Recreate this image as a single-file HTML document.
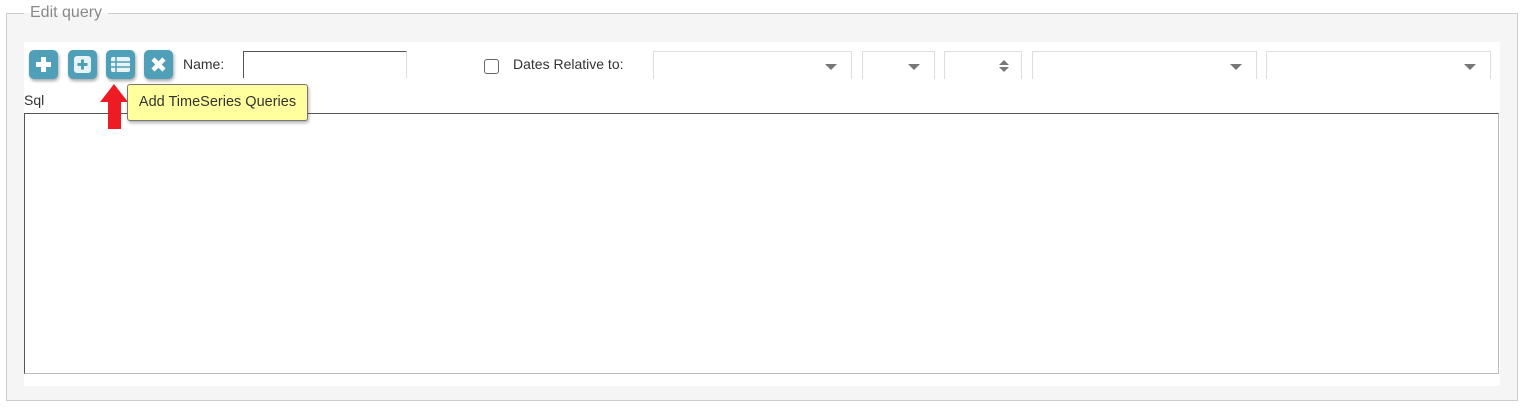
<!DOCTYPE html>
<html><head><style>
body{margin:0;width:1528px;height:414px;background:#fff;font-family:"Liberation Sans",sans-serif;position:relative;overflow:hidden}
.a{position:absolute}
.fs{left:6px;top:13px;width:1510px;height:386px;border:1px solid #ccc;background:#f5f5f5}
.lg{left:24px;top:3px;padding:0 6px;background:linear-gradient(#fff 50%,#f5f5f5 50%);color:#888;font-size:16px;line-height:20px}
.panel{left:24px;top:42px;width:1476px;height:344px;background:#fff}
.btn{top:50px;width:29px;height:29px;border-radius:5px;background:#4f9fb8;box-shadow:1px 2px 3px rgba(0,0,0,.35)}
.sel{top:51px;height:27px;border:1px solid #ddd;border-bottom:none;background:#fff}
.tri{position:absolute;right:14px;top:12px;width:0;height:0;border-left:6px solid transparent;border-right:6px solid transparent;border-top:6px solid #777}
.t{font-size:14px;color:#333}
</style></head><body>
<div class="a fs"></div>
<div class="a lg">Edit query</div>
<div class="a panel"></div>
<div class="a btn" style="left:29px"><svg width="29" height="29"><path d="M14.5 7v15M7 14.5h15" stroke="#fff" stroke-width="5"/></svg></div>
<div class="a btn" style="left:68px"><svg width="29" height="29"><rect x="6" y="6" width="17" height="17" rx="3" fill="#e8f3f6"/><path d="M14.5 9.5v10M9.5 14.5h10" stroke="#4f9fb8" stroke-width="3"/></svg></div>
<div class="a btn" style="left:106px"><svg width="29" height="29"><rect x="5" y="7" width="19" height="15" rx="2" fill="#e8f3f6"/><path d="M5 12h19M5 17h19M10 7v15" stroke="#4f9fb8" stroke-width="1.5"/></svg></div>
<div class="a btn" style="left:144px"><svg width="29" height="29"><path d="M9 9l11 11M20 9L9 20" stroke="#fff" stroke-width="4.5"/></svg></div>
<div class="a t" style="left:183px;top:56px">Name:</div>
<div class="a" style="left:243px;top:51px;width:164px;height:27px;border:1px solid #555;border-bottom:none;border-right-color:#ddd;box-sizing:border-box"></div>
<div class="a" style="left:484px;top:59px;width:13px;height:13px;border:1px solid #666;border-radius:3px"></div>
<div class="a t" style="left:513px;top:56px">Dates Relative to:</div>
<div class="a sel" style="left:653px;width:197px"><div class="tri"></div></div>
<div class="a sel" style="left:862px;width:71px"><div class="tri"></div></div>
<div class="a sel" style="left:944px;width:76px"><svg class="a" style="right:12px;top:6px" width="10" height="16"><path d="M0 7L5 2L10 7ZM0 9L5 14L10 9Z" fill="#777"/></svg></div>
<div class="a sel" style="left:1032px;width:223px"><div class="tri"></div></div>
<div class="a sel" style="left:1266px;width:223px"><div class="tri"></div></div>
<div class="a t" style="left:24px;top:92px">Sql</div>
<div class="a" style="left:24px;top:113px;width:1475px;height:261px;border:1px solid #555;border-right-color:#bbb;border-bottom-color:#bbb;box-sizing:border-box"></div>
<svg class="a" style="left:100px;top:84px" width="30" height="46"><path d="M14 0L28 18H21V45H8V18H0Z" fill="#ed1c24"/></svg>
<div class="a t" style="left:127px;top:84px;width:181px;height:37px;background:#ffff9e;border:1px solid #777;border-radius:3px;box-shadow:1px 2px 3px rgba(0,0,0,.3);line-height:35px;text-align:center;box-sizing:border-box;font-size:14.5px">Add TimeSeries Queries</div>
</body></html>
